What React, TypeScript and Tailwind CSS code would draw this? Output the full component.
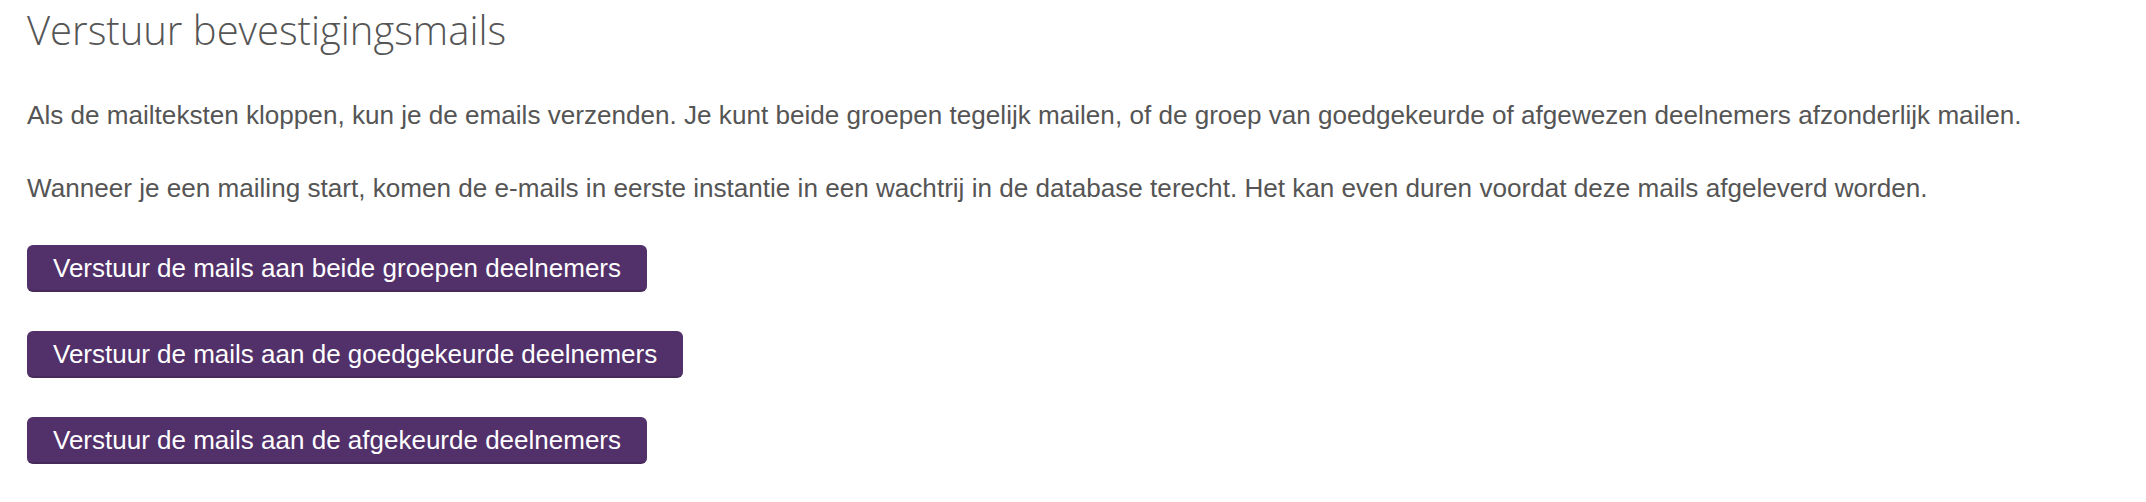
import React from "react";

const buttons = [
  "Verstuur de mails aan beide groepen deelnemers",
  "Verstuur de mails aan de goedgekeurde deelnemers",
  "Verstuur de mails aan de afgekeurde deelnemers",
];

export default function App() {
  return (
    <div className="min-h-[502px] w-[2146px] bg-white pl-[27px] pt-[2px]">
      <h1
        className="text-[40px] font-light leading-[56px] text-[#555555]"
        style={{ fontFamily: '"Open Sans", sans-serif' }}
      >
        Verstuur bevestigingsmails
      </h1>
      <div
        className="text-[26.1px] leading-[32px] text-[#555555]"
        style={{ fontFamily: '"Liberation Sans", Arial, sans-serif' }}
      >
        <p className="mt-[41px]">
          Als de mailteksten kloppen, kun je de emails verzenden. Je kunt beide groepen tegelijk mailen, of de groep van goedgekeurde of afgewezen deelnemers afzonderlijk mailen.
        </p>
        <p className="mt-[41px]">
          Wanneer je een mailing start, komen de e-mails in eerste instantie in een wachtrij in de database terecht. Het kan even duren voordat deze mails afgeleverd worden.
        </p>
        <div className="mt-[41px] flex flex-col items-start gap-[39px]">
          {buttons.map((b) => (
            <button
              key={b}
              className="h-[47px] rounded-[6px] border-b-2 border-[#462a5a] bg-[#52306a] px-[26px] text-[26px] leading-[32px] text-white"
            >
              {b}
            </button>
          ))}
        </div>
      </div>
    </div>
  );
}
